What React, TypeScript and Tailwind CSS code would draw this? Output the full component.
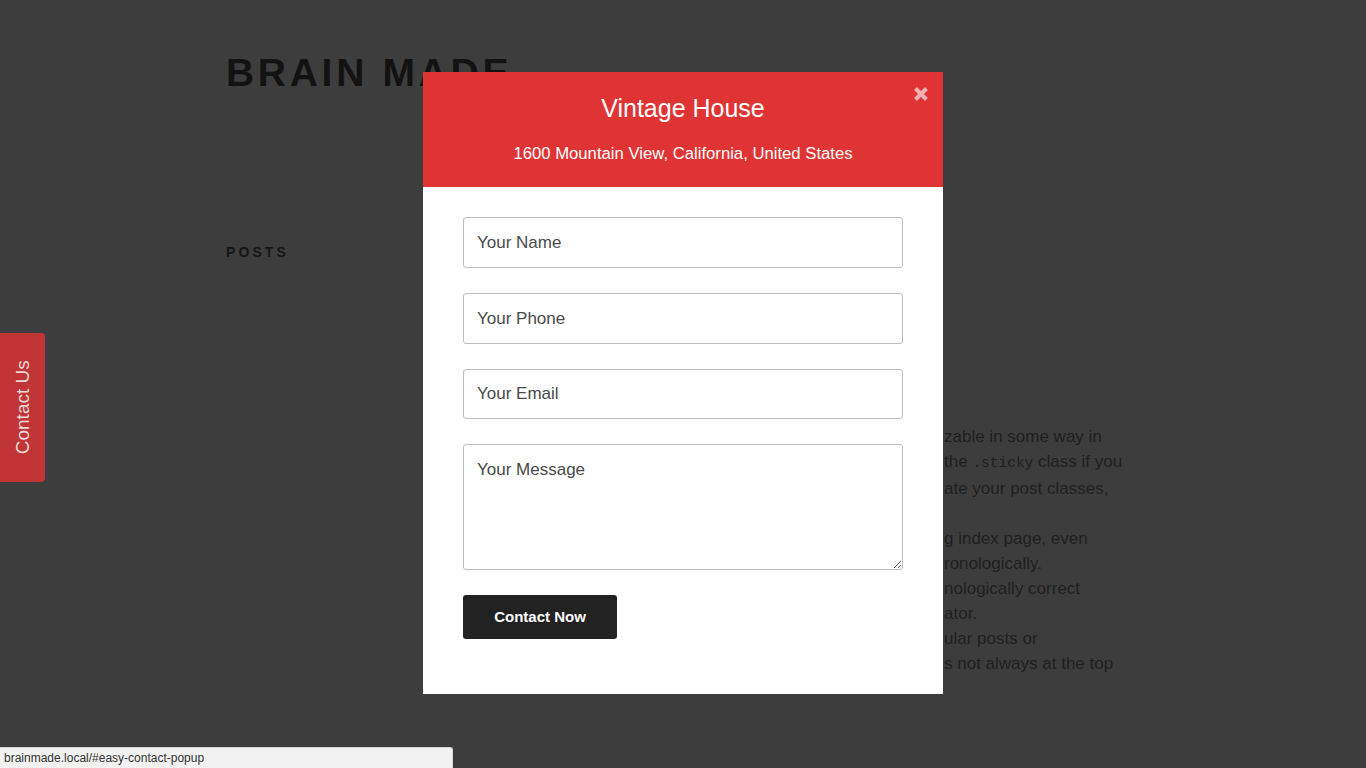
import React from "react";

const bodyLines: { text: React.ReactNode }[] = [
  { text: "zable in some way in" },
  {
    text: (
      <>
        the{" "}
        <code className="font-['Liberation_Mono',monospace] text-[14.5px]">.sticky</code> class if you
      </>
    ),
  },
  { text: "ate your post classes," },
  { text: "\u00a0" },
  { text: "g index page, even" },
  { text: "ronologically." },
  { text: "nologically correct" },
  { text: "ator." },
  { text: "ular posts or" },
  { text: "s not always at the top" },
];

export default function App() {
  return (
    <div className="relative w-full h-[768px] overflow-hidden bg-[#3d3d3d] font-['Liberation_Sans',Arial,sans-serif]">
      {/* dimmed page */}
      <header className="pl-[226px] pt-[50px]">
        <h1 className="text-[39px] leading-[46px] font-extrabold tracking-[0.095em] text-[#121212]">
          BRAIN MADE
        </h1>
      </header>
      <main className="flex pl-[226px] pt-[147px]">
        <div className="w-[717px] shrink-0">
          <h2 className="text-[14px] leading-[18px] font-bold tracking-[0.22em] text-[#151515]">POSTS</h2>
        </div>
        <div className="pt-[181px] text-[17px] leading-[25px] text-[#1f1f1f] whitespace-nowrap">
          {bodyLines.map((l, i) => (
            <div key={i} className="pl-[1px]">
              {l.text}
            </div>
          ))}
        </div>
      </main>

      {/* side tab */}
      <div className="absolute left-0 top-[333px] w-[45px] h-[149px] bg-[#c23537] rounded-r-[4px] flex items-center justify-center">
        <span className="-rotate-90 whitespace-nowrap text-[19px] text-[#eadada] font-['Liberation_Sans',Arial,sans-serif]">
          Contact Us
        </span>
      </div>

      {/* modal */}
      <div className="absolute left-[423px] top-[72px] w-[520px] bg-white">
        <div className="relative h-[115px] bg-[#e03334] flex flex-col items-center text-white">
          <div className="pt-[20px] text-[25px] leading-[32px]">Vintage House</div>
          <div className="mt-[18px] text-[16.7px] leading-[24px]">1600 Mountain View, California, United States</div>
          <svg
            className="absolute left-[490px] top-[14px]"
            width="16"
            height="16"
            viewBox="0 0 16 16"
          >
            <path d="M2.5 2.5 L13.5 13.5 M13.5 2.5 L2.5 13.5" stroke="#f3b2b2" strokeWidth="4" strokeLinecap="butt" />
          </svg>
        </div>
        <form className="px-[40px] pt-[30px] pb-[55px] flex flex-col gap-[25px]">
          <input
            className="h-[51px] w-full border border-[#bdbdbd] rounded-[3px] px-[13px] text-[17px] text-[#333] placeholder:text-[#4a4a4a] outline-none"
            placeholder="Your Name"
          />
          <input
            className="h-[51px] w-full border border-[#bdbdbd] rounded-[3px] px-[13px] text-[17px] text-[#333] placeholder:text-[#4a4a4a] outline-none"
            placeholder="Your Phone"
          />
          <input
            className="h-[50px] w-full border border-[#bdbdbd] rounded-[3px] px-[13px] text-[17px] text-[#333] placeholder:text-[#4a4a4a] outline-none"
            placeholder="Your Email"
          />
          <textarea
            className="h-[126px] w-full border border-[#bdbdbd] rounded-[3px] px-[13px] pt-[13px] text-[17px] leading-[24px] text-[#333] placeholder:text-[#4a4a4a] outline-none"
            placeholder="Your Message"
          />
          <div>
            <button
              type="button"
              className="w-[154px] h-[44px] bg-[#222222] rounded-[3px] text-white text-[15px] font-extrabold"
            >
              Contact Now
            </button>
          </div>
        </form>
      </div>

      {/* status bar */}
      <div className="absolute left-0 bottom-0 w-[453px] h-[21px] bg-[#f2f2f2] border-t border-r border-[#d6d6d6] rounded-tr-[3px] flex items-center pl-[4px]">
        <span className="text-[12px] text-[#333] font-['Liberation_Sans',Arial,sans-serif]">brainmade.local/#easy-contact-popup</span>
      </div>
    </div>
  );
}
